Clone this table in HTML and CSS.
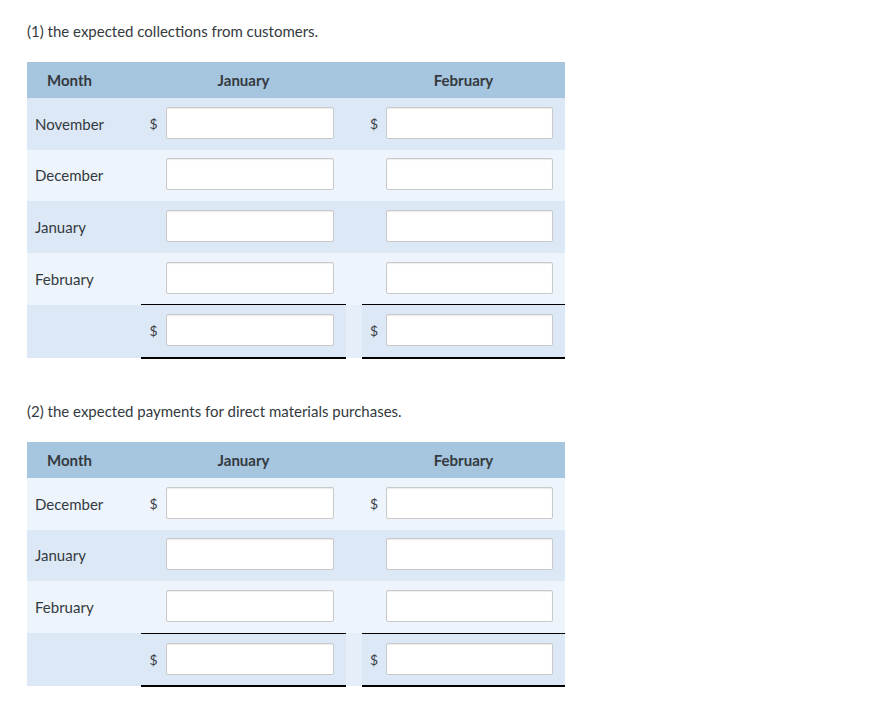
FILE: index.html
```html
<!DOCTYPE html>
<html>
<head>
<meta charset="utf-8">
<link rel="stylesheet" href="styles.css">
</head>
<body>
<div class="page">
  <p class="title first">(1) the expected collections from customers.</p>
  <table class="grid">
    <colgroup>
      <col class="c-label"><col class="c-sym1"><col class="c-in1"><col class="c-gap"><col class="c-sym2"><col class="c-in2">
    </colgroup>
    <thead>
      <tr><th class="h-month">Month</th><th colspan="2">January</th><th></th><th colspan="2">February</th></tr>
    </thead>
    <tbody>
      <tr class="dark"><td class="label">November</td><td class="sym">$</td><td class="in"><span class="box"></span></td><td></td><td class="sym">$</td><td class="in"><span class="box b2"></span></td></tr>
      <tr class="light"><td class="label">December</td><td class="sym"></td><td class="in"><span class="box"></span></td><td></td><td class="sym"></td><td class="in"><span class="box b2"></span></td></tr>
      <tr class="dark"><td class="label">January</td><td class="sym"></td><td class="in"><span class="box"></span></td><td></td><td class="sym"></td><td class="in"><span class="box b2"></span></td></tr>
      <tr class="light"><td class="label">February</td><td class="sym"></td><td class="in"><span class="box"></span></td><td></td><td class="sym"></td><td class="in"><span class="box b2"></span></td></tr>
      <tr class="dark total"><td class="label"></td><td class="sym t">$</td><td class="in t"><span class="box"></span></td><td class="gap"></td><td class="sym t">$</td><td class="in t"><span class="box b2"></span></td></tr>
    </tbody>
  </table>

  <p class="title second">(2) the expected payments for direct materials purchases.</p>
  <table class="grid">
    <colgroup>
      <col class="c-label"><col class="c-sym1"><col class="c-in1"><col class="c-gap"><col class="c-sym2"><col class="c-in2">
    </colgroup>
    <thead>
      <tr><th class="h-month">Month</th><th colspan="2">January</th><th></th><th colspan="2">February</th></tr>
    </thead>
    <tbody>
      <tr class="light"><td class="label">December</td><td class="sym">$</td><td class="in"><span class="box"></span></td><td></td><td class="sym">$</td><td class="in"><span class="box b2"></span></td></tr>
      <tr class="dark"><td class="label">January</td><td class="sym"></td><td class="in"><span class="box"></span></td><td></td><td class="sym"></td><td class="in"><span class="box b2"></span></td></tr>
      <tr class="light"><td class="label">February</td><td class="sym"></td><td class="in"><span class="box"></span></td><td></td><td class="sym"></td><td class="in"><span class="box b2"></span></td></tr>
      <tr class="dark total"><td class="label"></td><td class="sym t">$</td><td class="in t"><span class="box"></span></td><td class="gap"></td><td class="sym t">$</td><td class="in t"><span class="box b2"></span></td></tr>
    </tbody>
  </table>
</div>
</body>
</html>
```
FILE: styles.css
```css
html, body {
  margin: 0;
  padding: 0;
  background: #ffffff;
}
body {
  font-family: Lato, "Open Sans", "Liberation Sans", sans-serif;
  font-size: 15px;
  color: #343a40;
}
.page {
  padding: 21px 0 0 27px;
}
.title {
  margin: 0;
  line-height: 20px;
  font-size: 15px;
}
.title.first {
  margin-bottom: 21px;
}
.title.second {
  margin-top: 42px;
  margin-bottom: 21px;
}
.grid {
  border-collapse: collapse;
  border-spacing: 0;
  table-layout: fixed;
  width: 538px;
}
.c-label { width: 114px; }
.c-sym1 { width: 25px; }
.c-in1 { width: 180px; }
.c-gap { width: 16px; }
.c-sym2 { width: 24px; }
.c-in2 { width: 179px; }
thead tr {
  background: #a6c5de;
  height: 36px;
}
th {
  font-weight: bold;
  font-size: 15px;
  color: #343a40;
  text-align: center;
  padding: 0;
  height: 36px;
}
th.h-month {
  text-align: left;
  padding-left: 20px;
}
tbody tr {
  height: 51.6px;
}
tbody td {
  padding: 0;
  height: 51.6px;
  vertical-align: middle;
  line-height: 18px;
}
tr.dark { background: #dde8f7; }
tr.light { background: #edf4fc; }
td.label {
  padding-left: 8px;
  font-size: 15px;
}
td.sym {
  text-align: center;
  color: #3a3f44;
  font-size: 14px;
}
.box {
  display: block;
  width: 168px;
  height: 32px;
  box-sizing: border-box;
  background: #ffffff;
  border: 1px solid #c9c9c9;
  border-radius: 2px;
  box-shadow: inset 0 1px 1px rgba(0, 0, 0, 0.08);
  margin-top: -2px;
}
.box.b2 {
  width: 167px;
}
tr.total td.t {
  border-top: 1px solid #000000;
  border-bottom: 2px solid #000000;
}
tr.total td.gap {
  background: #e6eefa;
}
```
